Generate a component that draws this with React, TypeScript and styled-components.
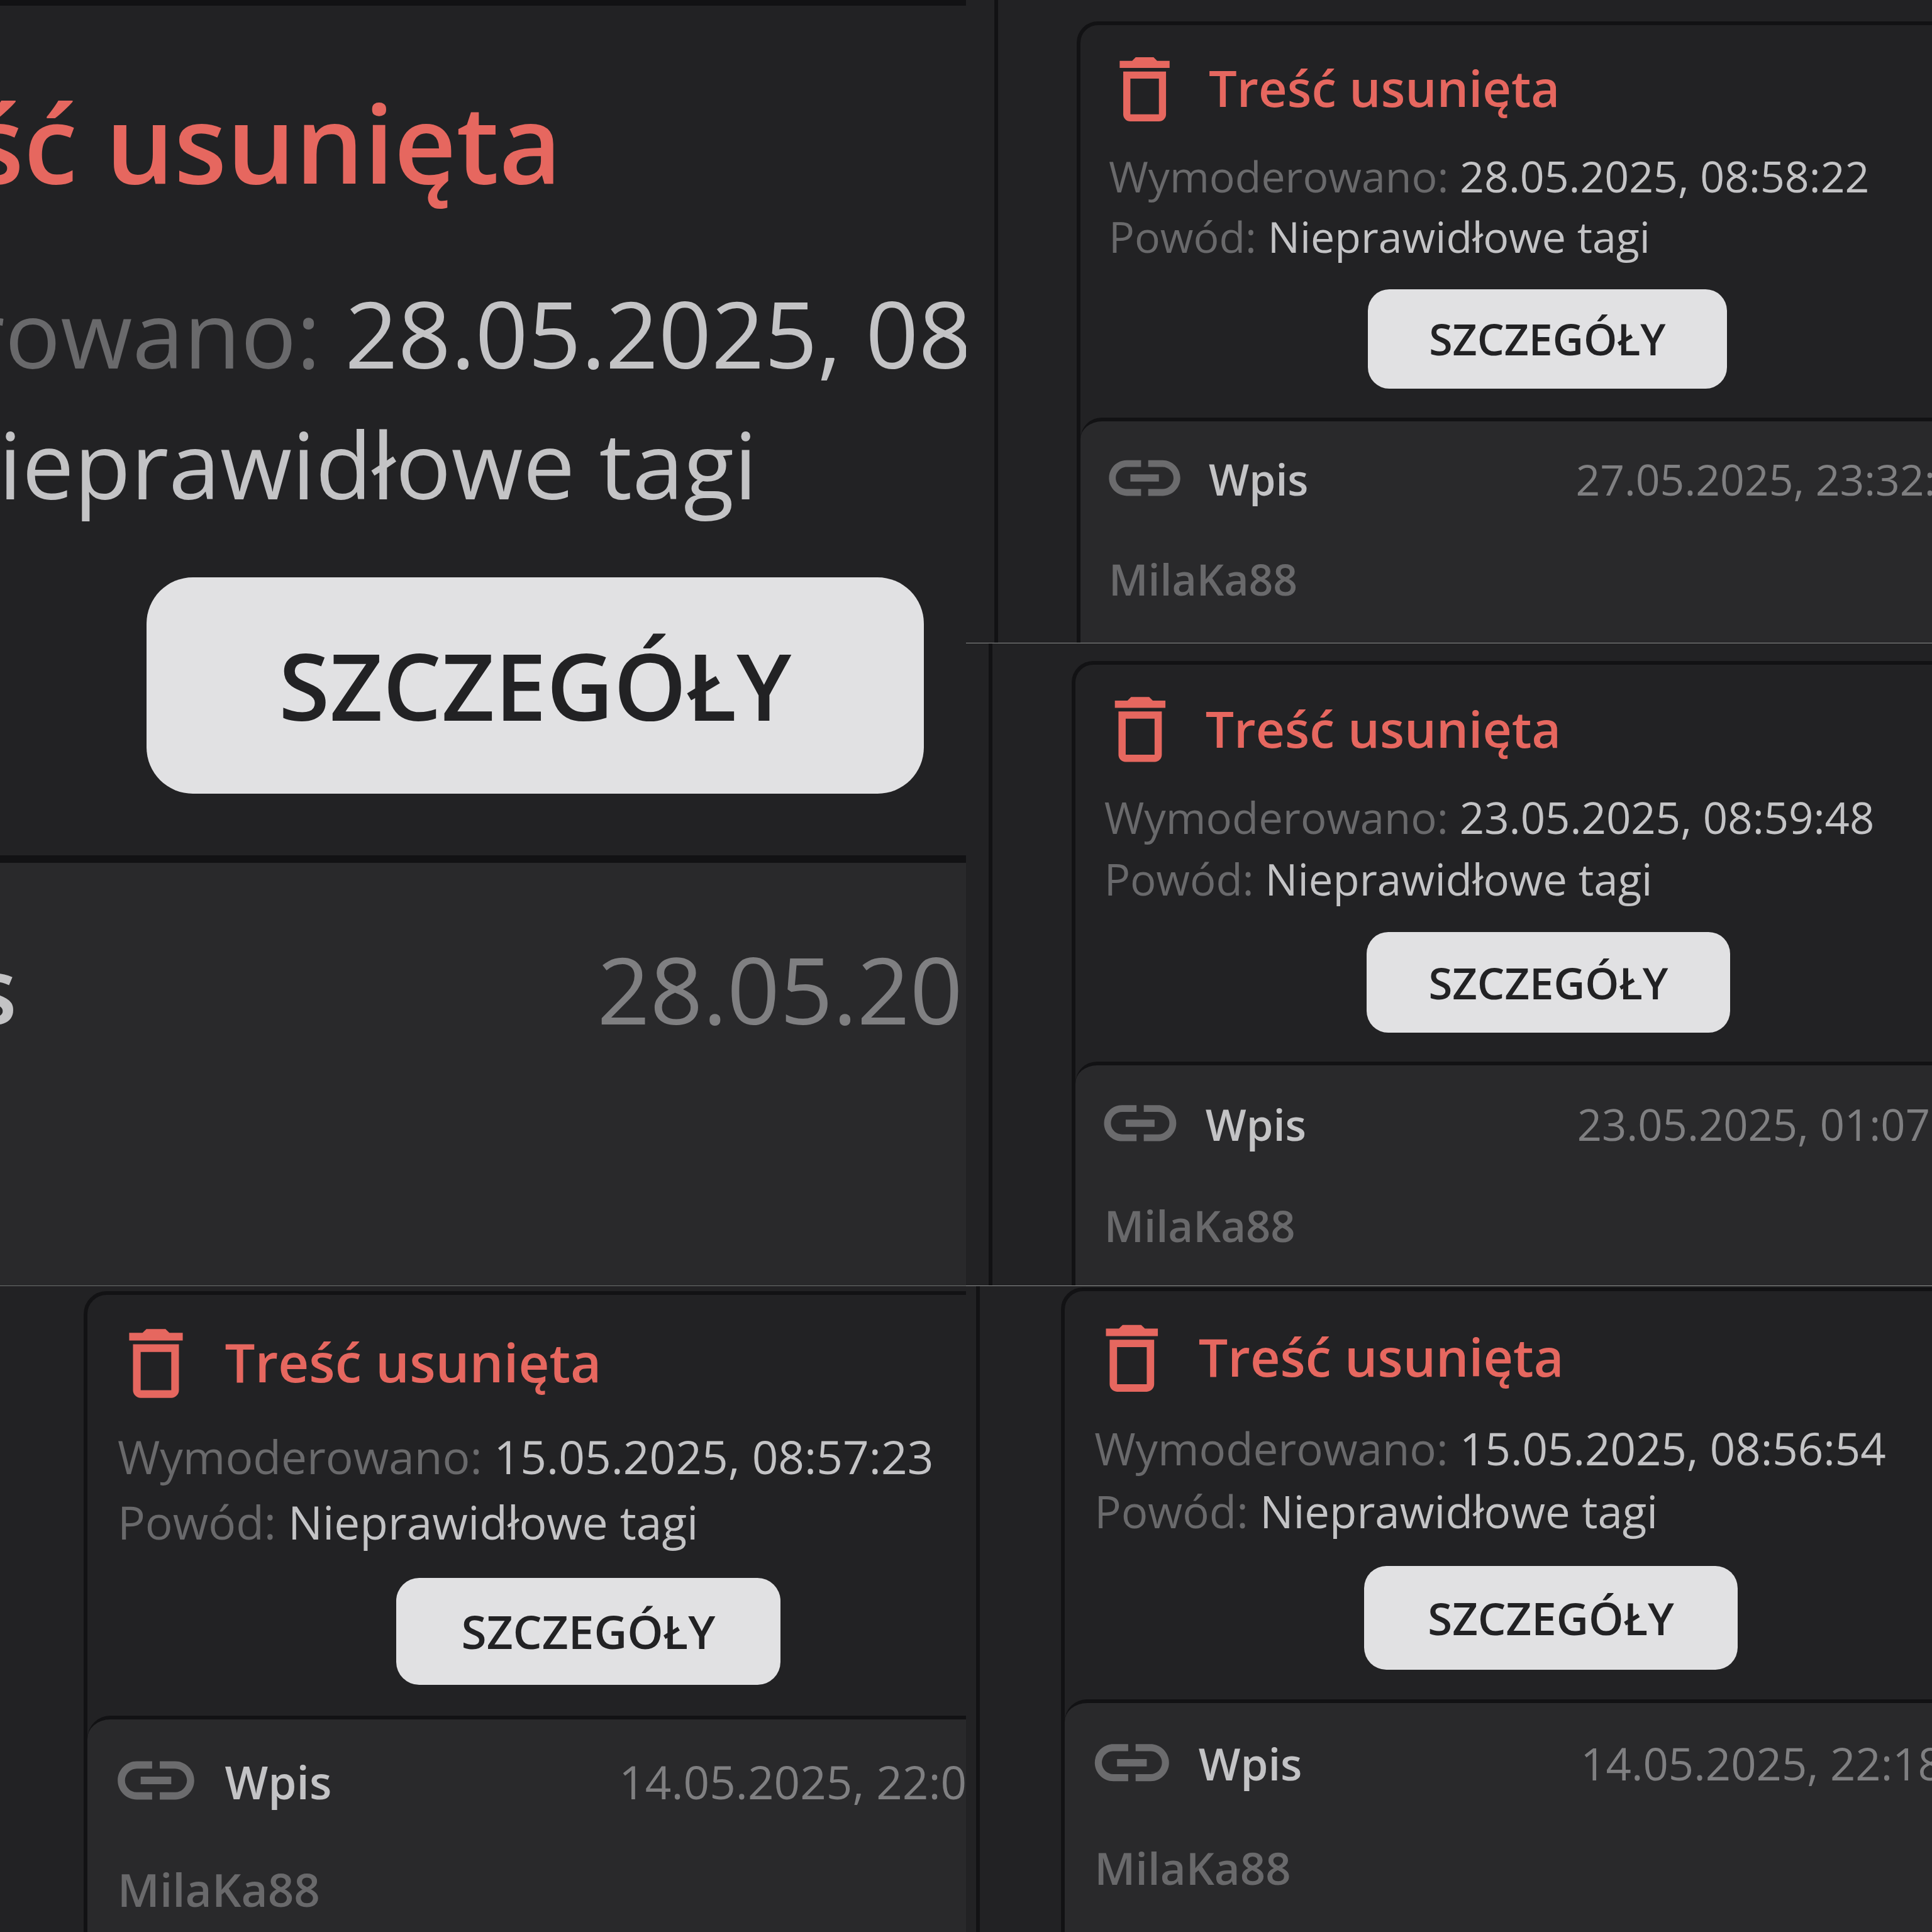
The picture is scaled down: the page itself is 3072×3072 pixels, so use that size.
import styled, { createGlobalStyle } from 'styled-components';

interface TileProps {
  scale: number;
  left: number;
  top: number;
}

interface ModerationEntry {
  removedAt: string;
  reason: string;
  createdAt: string;
  author?: string;
}

// every size inside a tile is a multiple of the tile's own unit
const u = (n: number) => `calc(var(--u) * ${n})`;
const line = 'round(var(--u), 1px) solid #121214';

const GlobalStyle = createGlobalStyle`
  body {
    margin: 0;
    background: #222224;
  }
  * {
    box-sizing: border-box;
  }
`;

const Collage = styled.main`
  display: grid;
  grid-template-columns: 1536px 1536px;
  width: 3072px;
  height: 3072px;
  overflow: hidden;
  font-family: 'Open Sans', 'Noto Sans', sans-serif;
`;

const LeftSide = styled.div`
  display: grid;
  grid-template-rows: 2044px 1px 1027px;
`;

const RightSide = styled.div`
  display: grid;
  grid-template-rows: 1022px 1px 1021px 1px 1027px;
`;

const Separator = styled.div<{ $dim?: boolean }>`
  background: ${(p) => (p.$dim ? '#6b6f6e' : '#8c8e8d')};
`;

const Tile = styled.section<{ $scale: number }>`
  --u: ${(p) => p.$scale}px;
  min-width: 0;
  overflow: hidden;
  background: #222224;
`;

const Column = styled.div<{ $left: number; $top: number }>`
  display: flow-root;
  width: ${u(310)};
  height: 100%;
  margin-left: calc(${(p) => p.$left}px - var(--u) * 23);
  padding-left: ${u(22)};
  border-left: ${line};

  > article {
    margin-top: ${(p) => p.$top}px;
  }
`;

const Card = styled.article`
  width: ${u(264)};
  height: ${u(220)};
  border: ${line};
  border-radius: ${u(6)};
`;

const Notice = styled.div`
  display: flex;
  flex-direction: column;
  height: ${u(110)};
  padding-top: ${u(6)};
`;

const NoticeHeader = styled.header`
  display: flex;
  align-items: center;
  gap: ${u(6)};
  height: ${u(24)};
  padding-left: ${u(6)};
  color: #e6675f;
`;

const Icon = styled.svg`
  flex: none;
  width: ${u(24)};
  height: ${u(24)};
  fill: currentColor;
`;

const Title = styled.h2`
  margin: 0;
  padding-bottom: ${u(0.7)};
  font-size: ${u(13.99)};
  font-weight: 600;
  line-height: ${u(20)};
  white-space: nowrap;
`;

const Details = styled.dl`
  margin: ${u(3.84)} 0 0;
  padding-left: ${u(7.95)};
  font-size: ${u(12)};
  line-height: ${u(17)};
  white-space: nowrap;
`;

const Detail = styled.div`
  display: flex;
  gap: 0.26em;
  height: ${u(17)};
`;

const Label = styled.dt`
  color: #69696b;
`;

const Value = styled.dd`
  margin: 0;
  color: #c3c3c5;
`;

const DetailsButton = styled.button`
  align-self: center;
  width: ${u(100.6)};
  height: ${u(28)};
  margin-top: ${u(6.16)};
  padding: 0;
  border: 0;
  border-radius: ${u(6)};
  background: #e1e1e3;
  color: #222224;
  font-family: inherit;
  font-size: ${u(11.98)};
  font-weight: 600;
  line-height: ${u(28)};
  text-align: center;
`;

const Entry = styled.div`
  height: ${u(109)};
  padding: ${u(4)} ${u(8)} 0 ${u(6)};
  border-top: ${line};
  border-radius: ${u(6)};
  background: #29292b;
`;

const EntryHeader = styled.header`
  display: flex;
  align-items: center;
  gap: ${u(6)};
  height: ${u(24)};
  color: #6b6b6d;
  font-size: ${u(11.97)};
  line-height: ${u(24)};
`;

const EntryType = styled.span`
  padding-top: ${u(0.6)};
  color: #c3c3c5;
  font-weight: 600;
`;

const EntryDate = styled.time`
  width: ${u(115)};
  margin-left: auto;
  padding-top: ${u(0.6)};
  color: #7f7f81;
  white-space: nowrap;
`;

const Author = styled.div`
  margin-top: ${u(7.84)};
  padding-left: ${u(1.95)};
  color: #69696b;
  font-size: ${u(11.98)};
  font-weight: 600;
  line-height: ${u(17)};
`;

const TrashIcon = () => (
  <Icon viewBox="0 0 24 24">
    <path d="M6 19c0 1.1.9 2 2 2h8c1.1 0 2-.9 2-2V7H6v12zM8 9h8v10H8V9zm7.5-5l-1-1h-5l-1 1H5v2h14V4z" />
  </Icon>
);

const LinkIcon = () => (
  <Icon viewBox="0 0 24 24">
    <path d="M3.9 12c0-1.71 1.39-3.1 3.1-3.1h4V7H7c-2.76 0-5 2.24-5 5s2.24 5 5 5h4v-1.9H7c-1.71 0-3.1-1.39-3.1-3.1zM8 13h8v-2H8v2zm9-6h-4v1.9h4c1.71 0 3.1 1.39 3.1 3.1s-1.39 3.1-3.1 3.1h-4V17h4c2.76 0 5-2.24 5-5s-2.24-5-5-5z" />
  </Icon>
);

const ModerationTile = ({
  scale,
  left,
  top,
  removedAt,
  reason,
  createdAt,
  author,
}: TileProps & ModerationEntry) => (
  <Tile $scale={scale}>
    <Column $left={left} $top={top}>
      <Card>
        <Notice>
          <NoticeHeader>
            <TrashIcon />
            <Title>Treść usunięta</Title>
          </NoticeHeader>
          <Details>
            <Detail>
              <Label>Wymoderowano:</Label>
              <Value>{removedAt}</Value>
            </Detail>
            <Detail>
              <Label>Powód:</Label>
              <Value>{reason}</Value>
            </Detail>
          </Details>
          <DetailsButton type="button">SZCZEGÓŁY</DetailsButton>
        </Notice>
        <Entry>
          <EntryHeader>
            <LinkIcon />
            <EntryType>Wpis</EntryType>
            <EntryDate>{createdAt}</EntryDate>
          </EntryHeader>
          {author && <Author>{author}</Author>}
        </Entry>
      </Card>
    </Column>
  </Tile>
);

const App = () => (
  <>
    <GlobalStyle />
    <Collage>
      <LeftSide>
        <ModerationTile
          scale={12.28}
          left={-769.8}
          top={-3}
          removedAt="28.05.2025, 08"
          reason="Nieprawidłowe tagi"
          createdAt="28.05.2025"
        />
        <Separator $dim />
        <ModerationTile
          scale={6.083}
          left={132.6}
          top={7.6}
          removedAt="15.05.2025, 08:57:23"
          reason="Nieprawidłowe tagi"
          createdAt="14.05.2025, 22:0"
          author="MilaKa88"
        />
      </LeftSide>
      <RightSide>
        <ModerationTile
          scale={5.67}
          left={175.6}
          top={34}
          removedAt="28.05.2025, 08:58:22"
          reason="Nieprawidłowe tagi"
          createdAt="27.05.2025, 23:32:"
          author="MilaKa88"
        />
        <Separator />
        <ModerationTile
          scale={5.742}
          left={167.8}
          top={27.8}
          removedAt="23.05.2025, 08:59:48"
          reason="Nieprawidłowe tagi"
          createdAt="23.05.2025, 01:07"
          author="MilaKa88"
        />
        <Separator />
        <ModerationTile
          scale={5.9}
          left={151.2}
          top={2.2}
          removedAt="15.05.2025, 08:56:54"
          reason="Nieprawidłowe tagi"
          createdAt="14.05.2025, 22:18"
          author="MilaKa88"
        />
      </RightSide>
    </Collage>
  </>
);

export default App;
